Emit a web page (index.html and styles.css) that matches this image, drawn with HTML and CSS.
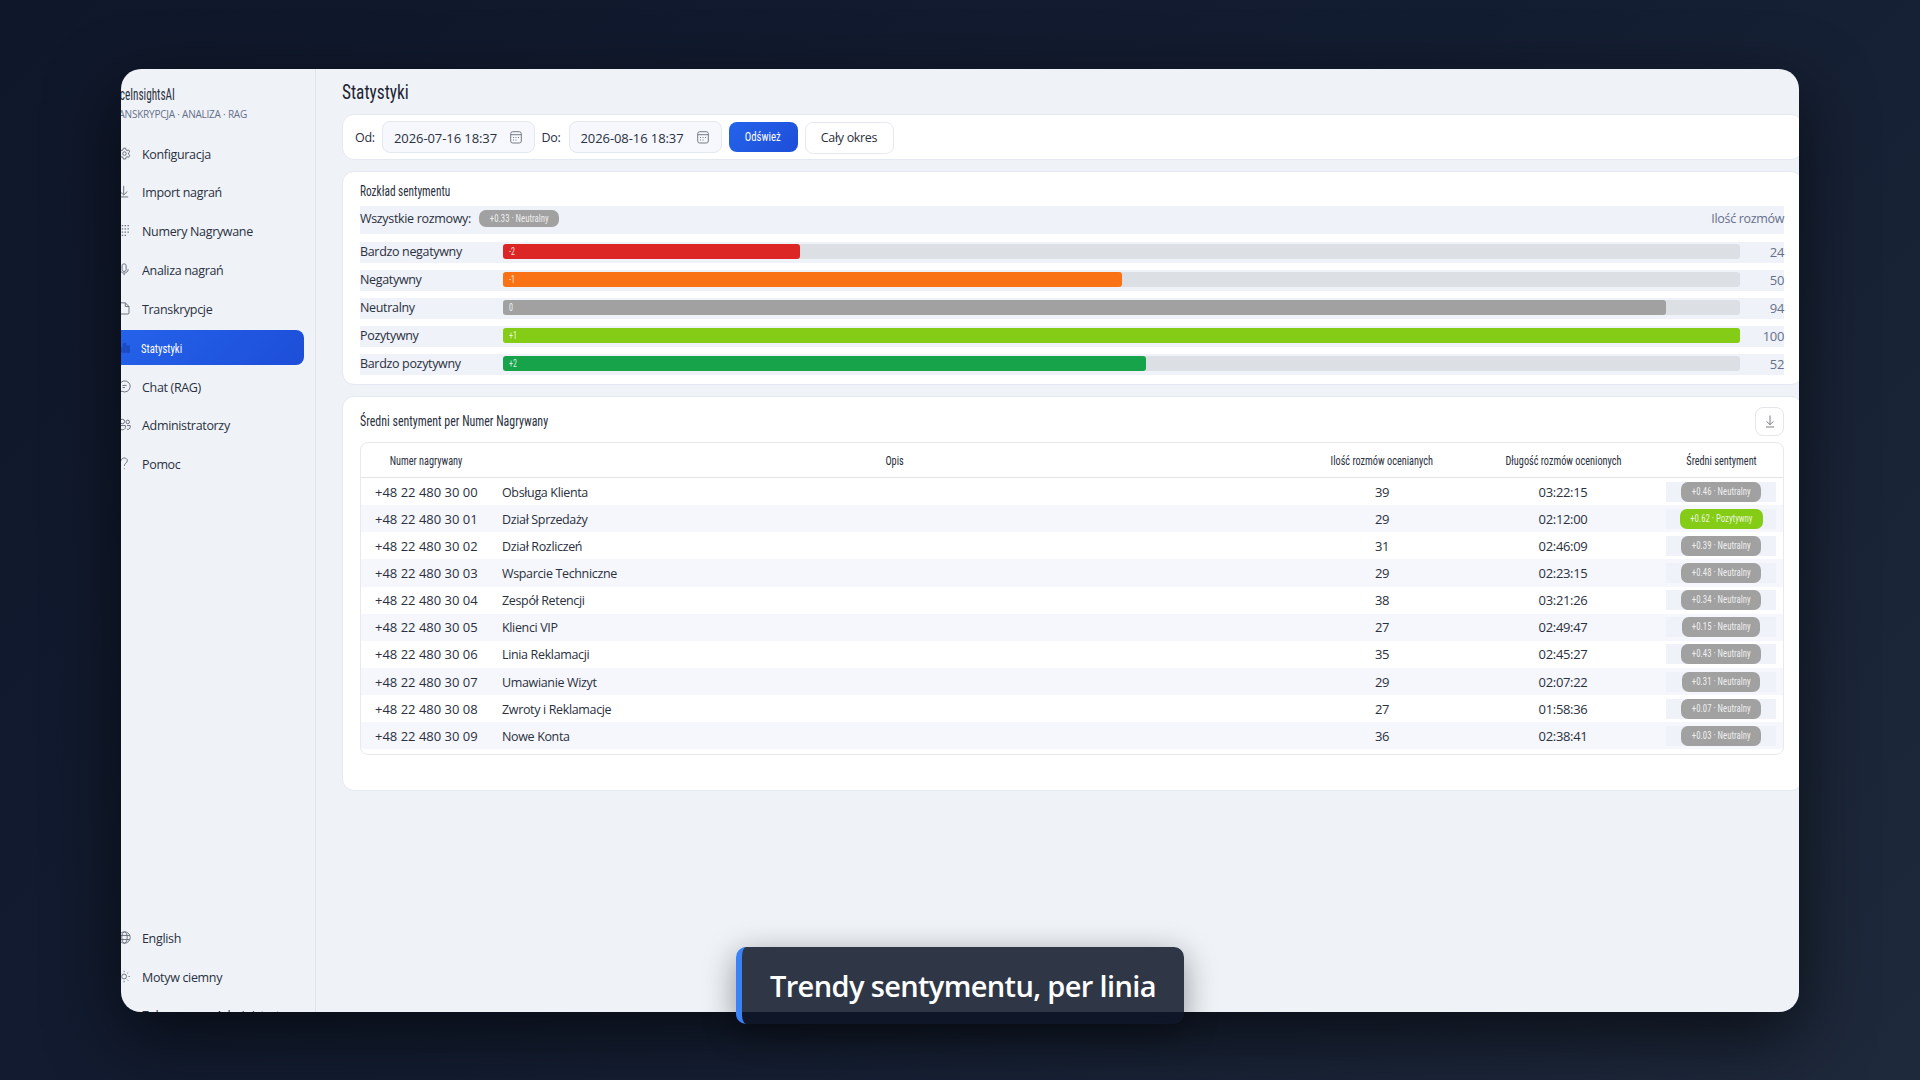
FILE: index.html
```
<!DOCTYPE html>
<html lang="pl">
<head>
<meta charset="utf-8">
<title>Statystyki</title>
<link rel="stylesheet" href="styles.css">
</head>
<body>
<div class="window">
  <aside class="sidebar">
    <div class="brand"><span class="narrow">VoiceInsightsAI</span></div>
    <div class="tagline">TRANSKRYPCJA · ANALIZA · RAG</div>
    <nav class="nav">
      <a class="item"><svg class="icon" viewBox="0 0 16 16"><path d="M6.6 1.5h2.8l.4 2 1.3.8 2-.7 1.4 2.400-1.600 1.400v1.500l1.600 1.400-1.400 2.400-2-.7-1.300.8-.4 2H6.600l-.4-2-1.300-.8-2 .7-1.400-2.400 1.600-1.400V7.400L1.500 6l1.400-2.400 2 .7 1.300-.8z"/><circle cx="8" cy="8.100" r="2.200"/></svg>Konfiguracja</a>
      <a class="item"><svg class="icon" viewBox="0 0 16 16"><path d="M7 1v11M2.500 8L7 12.300 11.500 8M2 14.700h10.500"/></svg>Import nagrań</a>
      <a class="item"><svg class="icon" viewBox="0 0 16 16"><path class="dots" d="M2 2h.01M5.500 2h.01M9 2h.01M12.500 2h.01M2 6h.01M5.500 6h.01M9 6h.01M12.500 6h.01M2 10h.01M5.500 10h.01M9 10h.01M12.500 10h.01M5.500 14h.01M9 14h.01"/></svg>Numery Nagrywane</a>
      <a class="item"><svg class="icon" viewBox="0 0 16 16"><rect x="5" y="1" width="5" height="9.500" rx="2.500"/><path d="M2.500 7.500c0 6.500 10 6.500 10 0M7.500 12.500V15"/></svg>Analiza nagrań</a>
      <a class="item"><svg class="icon" viewBox="0 0 16 16"><path d="M3.500 1H9l4.500 4.500v8q0 1.300-1.300 1.300H3.500q-1.300 0-1.300-1.300V2.300Q2.200 1 3.500 1zM9 1v4.500h4.500"/></svg>Transkrypcje</a>
      <a class="item active"><svg class="icon" viewBox="0 0 16 16"><path d="M2 14V8h3v6zM6.500 14V3h3v11zM11 14V6h3v8z"/></svg><span class="narrow">Statystyki</span></a>
      <a class="item"><svg class="icon" viewBox="0 0 16 16"><path d="M1.500 14.500l.8-3.200a6.800 6.800 0 1 1 2.700 2.600zM5.500 6.700h5M5.500 9.300h3"/></svg>Chat (RAG)</a>
      <a class="item"><svg class="icon" viewBox="0 0 16 16"><circle cx="5.300" cy="4.300" r="2.800"/><circle cx="12" cy="4.800" r="2.200"/><path d="M.8 9.300h8.400v2.200c0 4-8.400 4-8.400 0zM11 9.300h4v2c0 2-2 3-4 2.600"/></svg>Administratorzy</a>
      <a class="item"><svg class="icon" viewBox="0 0 16 16"><path d="M4 4.500c0-4.500 7.500-4.200 7.500 0 0 3-3.700 3-3.700 6.500M7.800 14v1"/></svg>Pomoc</a>
    </nav>
    <nav class="nav nav-foot">
      <a class="item"><svg class="icon" viewBox="0 0 16 16"><circle cx="8" cy="8" r="7"/><ellipse cx="8" cy="8" rx="3.300" ry="7"/><path d="M1.500 5.500h13M1.500 10.500h13"/></svg>English</a>
      <a class="item"><svg class="icon" viewBox="0 0 16 16"><circle cx="7.500" cy="8" r="3"/><path d="M7.500 1v1.600M7.500 13.400V15M.5 8h1.600M12.900 8h1.600M2.500 3l1.100 1.100M11.400 11.900l1.100 1.100M12.500 3l-1.100 1.100M3.600 11.900L2.500 13"/></svg>Motyw ciemny</a>
      <a class="item account"><svg class="icon" viewBox="0 0 16 16"></svg>Zalogowano: Administrator</a>
    </nav>
  </aside>

  <main class="main">
    <h1 class="title"><span class="narrow">Statystyki</span></h1>

    <section class="card filters">
      <label>Od:</label>
      <div class="field">2026-07-16 18:37<svg class="cal" viewBox="0 0 12 13"><rect x=".7" y=".7" width="10.600" height="11.300" rx="2"/><path d="M.7 3.700h10.600M3 6.500h1M5.500 6.500h1M8 6.500h1M3 9h1M5.500 9h1"/></svg></div>
      <label>Do:</label>
      <div class="field">2026-08-16 18:37<svg class="cal" viewBox="0 0 12 13"><rect x=".7" y=".7" width="10.600" height="11.300" rx="2"/><path d="M.7 3.700h10.600M3 6.500h1M5.500 6.500h1M8 6.500h1M3 9h1M5.500 9h1"/></svg></div>
      <button class="btn primary"><span class="narrow">Odśwież</span></button>
      <button class="btn plain">Cały okres</button>
    </section>

    <section class="card dist">
      <h2 class="subtitle"><span class="narrow">Rozkład sentymentu</span></h2>
      <div class="summary"><span>Wszystkie rozmowy:</span><span class="badge neutral"><span class="narrow">+0.33 · Neutralny</span></span><span class="muted">Ilość rozmów</span></div>
      <div class="bars">
        <div class="bar-row"><span>Bardzo negatywny</span><div class="track"><div class="fill very-neg" style="width:24%"><span class="narrow">-2</span></div></div><span class="muted">24</span></div>
        <div class="bar-row"><span>Negatywny</span><div class="track"><div class="fill neg" style="width:50%"><span class="narrow">-1</span></div></div><span class="muted">50</span></div>
        <div class="bar-row"><span>Neutralny</span><div class="track"><div class="fill neutral" style="width:94%"><span class="narrow">0</span></div></div><span class="muted">94</span></div>
        <div class="bar-row"><span>Pozytywny</span><div class="track"><div class="fill pos" style="width:100%"><span class="narrow">+1</span></div></div><span class="muted">100</span></div>
        <div class="bar-row"><span>Bardzo pozytywny</span><div class="track"><div class="fill very-pos" style="width:52%"><span class="narrow">+2</span></div></div><span class="muted">52</span></div>
      </div>
    </section>

    <section class="card numbers">
      <div class="numbers-head">
        <h2 class="subtitle wide"><span class="narrow">Średni sentyment per Numer Nagrywany</span></h2>
        <button class="download"><svg viewBox="0 0 10 13"><path d="M5 .5v9M1.500 6.300L5 9.700l3.500-3.400M1 12h8"/></svg></button>
      </div>
      <div class="table">
        <div class="row head"><span><span class="narrow">Numer nagrywany</span></span><span><span class="narrow">Opis</span></span><span><span class="narrow">Ilość rozmów ocenianych</span></span><span><span class="narrow">Długość rozmów ocenionych</span></span><span><span class="narrow">Średni sentyment</span></span></div>
        <div class="row"><span class="phone">+48 22 480 30 00</span><span class="desc">Obsługa Klienta</span><span>39</span><span class="time">03:22:15</span><span class="mood"><span class="badge neutral"><span class="narrow">+0.46 · Neutralny</span></span></span></div>
        <div class="row"><span class="phone">+48 22 480 30 01</span><span class="desc">Dział Sprzedaży</span><span>29</span><span class="time">02:12:00</span><span class="mood"><span class="badge pos"><span class="narrow">+0.62 · Pozytywny</span></span></span></div>
        <div class="row"><span class="phone">+48 22 480 30 02</span><span class="desc">Dział Rozliczeń</span><span>31</span><span class="time">02:46:09</span><span class="mood"><span class="badge neutral"><span class="narrow">+0.39 · Neutralny</span></span></span></div>
        <div class="row"><span class="phone">+48 22 480 30 03</span><span class="desc">Wsparcie Techniczne</span><span>29</span><span class="time">02:23:15</span><span class="mood"><span class="badge neutral"><span class="narrow">+0.48 · Neutralny</span></span></span></div>
        <div class="row"><span class="phone">+48 22 480 30 04</span><span class="desc">Zespół Retencji</span><span>38</span><span class="time">03:21:26</span><span class="mood"><span class="badge neutral"><span class="narrow">+0.34 · Neutralny</span></span></span></div>
        <div class="row"><span class="phone">+48 22 480 30 05</span><span class="desc">Klienci VIP</span><span>27</span><span class="time">02:49:47</span><span class="mood"><span class="badge neutral slim"><span class="narrow">+0.15 · Neutralny</span></span></span></div>
        <div class="row"><span class="phone">+48 22 480 30 06</span><span class="desc">Linia Reklamacji</span><span>35</span><span class="time">02:45:27</span><span class="mood"><span class="badge neutral"><span class="narrow">+0.43 · Neutralny</span></span></span></div>
        <div class="row"><span class="phone">+48 22 480 30 07</span><span class="desc">Umawianie Wizyt</span><span>29</span><span class="time">02:07:22</span><span class="mood"><span class="badge neutral slim"><span class="narrow">+0.31 · Neutralny</span></span></span></div>
        <div class="row"><span class="phone">+48 22 480 30 08</span><span class="desc">Zwroty i Reklamacje</span><span>27</span><span class="time">01:58:36</span><span class="mood"><span class="badge neutral"><span class="narrow">+0.07 · Neutralny</span></span></span></div>
        <div class="row"><span class="phone">+48 22 480 30 09</span><span class="desc">Nowe Konta</span><span>36</span><span class="time">02:38:41</span><span class="mood"><span class="badge neutral"><span class="narrow">+0.03 · Neutralny</span></span></span></div>
      </div>
    </section>
  </main>
</div>
<div class="caption">Trendy sentymentu, per linia</div>
</body>
</html>
```
FILE: styles.css
```
* { box-sizing: border-box; }

body {
  margin: 0;
  width: 1920px;
  height: 1080px;
  overflow: hidden;
  padding: 69px 121px 68px;
  background: linear-gradient(135deg, #0f172a 0%, #131d31 50%, #1e293b 100%);
  font: 12.5px/18px "Open Sans", "Noto Sans", sans-serif;
  letter-spacing: -0.33px;
  color: #2a3040;
}

h1, h2 { margin: 0; font-weight: 400; }
button { font: inherit; letter-spacing: inherit; color: inherit; padding: 0; }

/* Condensed display face */
.narrow {
  display: inline-block;
  flex: none;
  font-family: "Roboto Condensed", Roboto, sans-serif;
  letter-spacing: 0;
  white-space: nowrap;
  transform: scaleX(0.78);
}

.window {
  display: flex;
  width: 1678px;
  height: 943px;
  overflow: hidden;
  border-radius: 20px;
  background: #eff3f8;
  box-shadow: 0 24px 70px rgba(0, 0, 0, 0.6);
}

/* Sidebar */
.sidebar {
  flex: none;
  display: flex;
  flex-direction: column;
  width: 195px;
  height: 964px;
  padding-top: 15px;
  border-right: 1px solid #e0e5ec;
}
.brand {
  display: flex;
  justify-content: flex-end;
  width: 54px;
  height: 22px;
  font-size: 16px;
  line-height: 22px;
}
.brand .narrow { transform: scaleX(0.7); transform-origin: right; }
.tagline {
  display: flex;
  justify-content: flex-end;
  width: 126px;
  height: 14px;
  font-size: 10px;
  line-height: 16px;
  letter-spacing: -0.22px;
  white-space: nowrap;
  color: #66708a;
}
.nav {
  display: flex;
  flex-direction: column;
  gap: 3.85px;
  margin: 16px 12px 0 -12px;
}
.nav-foot { margin-top: auto; }
.item {
  display: flex;
  align-items: center;
  gap: 11px;
  height: 35px;
  padding: 2px 0 0 9px;
  border-radius: 8px;
  white-space: nowrap;
}
.item.account { padding-top: 0; }
.icon {
  flex: none;
  width: 13px;
  height: 13px;
  margin-top: -3px;
  fill: none;
  stroke: #6b717e;
  stroke-width: 1.2;
}
.icon .dots { stroke-width: 1.7; stroke-linecap: square; }
.item.active {
  margin-right: -1px;
  gap: 10px;
  font-size: 13px;
  background: linear-gradient(135deg, #2563eb, #1d4ed8);
  color: #fff;
}
.item.active .icon { stroke: #1d4ac0; fill: #1d4ac0; }
.item.active .narrow { transform: scaleX(0.82); transform-origin: left; }

/* Content */
.main {
  flex: none;
  display: flex;
  flex-direction: column;
  gap: 11px;
  width: 1487px;
  padding-left: 26px;
}
.title {
  height: 34px;
  padding-top: 9px;
  font-size: 21px;
  line-height: 26px;
  color: #1d2433;
}
.title .narrow { transform: scaleX(0.825); transform-origin: left; }
.card {
  border: 1px solid #e4e8f0;
  border-radius: 12px;
  background: #fff;
}

.filters {
  display: flex;
  align-items: center;
  height: 46px;
  padding: 1px 0 0 12px;
}
.field {
  display: flex;
  align-items: center;
  justify-content: space-between;
  width: 153px;
  height: 32px;
  margin: -1px 7px 0 8px;
  padding: 1px 12px 0 11px;
  border: 1px solid #e3e7f0;
  border-radius: 8px;
  background: #f6f8fd;
  font-size: 13px;
  letter-spacing: -0.08px;
}
.field + label { margin-left: -0.5px; }
.filters label { width: 19px; white-space: nowrap; }
.cal {
  width: 12px;
  height: 13px;
  margin-top: -1px;
  fill: none;
  stroke: #747a86;
}
.btn { border-radius: 8px; }
.primary {
  display: flex;
  align-items: center;
  justify-content: center;
  width: 69px;
  height: 30px;
  margin: -1px 7px 0 0;
  border: 0;
  background: linear-gradient(135deg, #2563eb, #1d4ed8);
  font-size: 13px;
  color: #fff;
}
.primary .narrow { transform: scaleX(0.83); }
.plain {
  width: 89px;
  height: 32px;
  border: 1px solid #e6e9f0;
  background: #fff;
}

.subtitle { font-size: 14.5px; line-height: 20px; }
.subtitle .narrow { transform: scaleX(0.78); transform-origin: left; }
.subtitle.wide .narrow { transform: scaleX(0.822); }
.muted { color: #66708a; }

.dist { height: 214px; padding: 9px 18px 0 17px; }
.summary {
  display: flex;
  align-items: center;
  height: 28px;
  margin-top: 4px;
  padding-bottom: 2px;
  background: #eff2f8;
}
.summary .badge { width: 80px; height: 17px; margin: -1px 0 0 8px; }
.summary .muted { margin-left: auto; }
.bars { display: grid; gap: 7px; margin-top: 8px; }
.bar-row {
  display: grid;
  grid-template-columns: 143px 1237px 1fr;
  align-items: center;
  height: 21px;
  padding-bottom: 1px;
  background: #eff2f8;
}
.bar-row .muted { text-align: right; font-size: 13px; }
.track { height: 15px; margin-top: -1px; border-radius: 3px; background: #dce0e5; }
.fill {
  display: flex;
  align-items: center;
  height: 15px;
  padding-left: 6px;
  border-radius: 3px;
  font-size: 10px;
  color: rgba(255, 255, 255, 0.85);
}
.fill .narrow { transform-origin: left; transform: scaleX(0.8); }

.very-neg { background: #dc2626; }
.neg { background: #f97316; }
.neutral { background: #a1a1a1; }
.pos { background: #84cc16; }
.very-pos { background: #16a34a; }

.badge {
  display: flex;
  align-items: center;
  justify-content: center;
  width: 80px;
  height: 20px;
  border-radius: 7px;
  font-size: 10.5px;
  color: rgba(255, 255, 255, 0.85);
}
.badge .narrow { transform: scaleX(0.835); }
.badge.pos { width: 83px; }
.badge.slim { width: 78px; }

.numbers { height: 395px; padding: 9px 18px 0 17px; }
.numbers-head {
  display: flex;
  align-items: center;
  justify-content: space-between;
  height: 30px;
  margin-bottom: 6px;
}
.download {
  display: flex;
  align-items: center;
  justify-content: center;
  width: 29px;
  height: 29px;
  border: 1px solid #e4e6ec;
  border-radius: 8px;
  background: #fff;
}
.download svg { width: 10px; height: 13px; fill: none; stroke: #7b7f88; }

.table {
  height: 313px;
  border: 1px solid #e6e9ee;
  border-radius: 8px;
}
.row {
  display: grid;
  grid-template-columns: 130px 807px 168px 194px 1fr;
  align-items: center;
  height: 27.15px;
  text-align: center;
  font-size: 13px;
}
.row:nth-child(odd):not(.head) { background: #f6f7fc; }
.row.head { height: 35px; border-bottom: 1px solid #e2e4e8; }
.head > span { display: flex; justify-content: center; min-width: 0; padding-top: 1px; }
.row.head .narrow { transform: scaleX(0.79); }
.row .phone { padding-left: 14px; text-align: left; letter-spacing: 0; }
.row .desc { padding: 2px 0 0 11px; text-align: left; font-size: 12.5px; letter-spacing: -0.35px; }
.mood {
  display: flex;
  align-items: center;
  justify-content: center;
  width: 110px;
  height: 20px;
  margin-left: 6px;
  background: #eff2f8;
}

/* Overlay caption across the lower window edge */
.caption {
  position: absolute;
  left: 736px;
  top: 947px;
  width: 448px;
  height: 77px;
  padding-left: 28px;
  border-left: 6px solid #3b82f6;
  border-radius: 10px;
  background: rgba(15, 23, 42, 0.86);
  box-shadow: 0 8px 32px rgba(0, 0, 0, 0.4);
  font-size: 29px;
  font-weight: 600;
  line-height: 77px;
  letter-spacing: -0.64px;
  white-space: nowrap;
  color: #fff;
}
```
